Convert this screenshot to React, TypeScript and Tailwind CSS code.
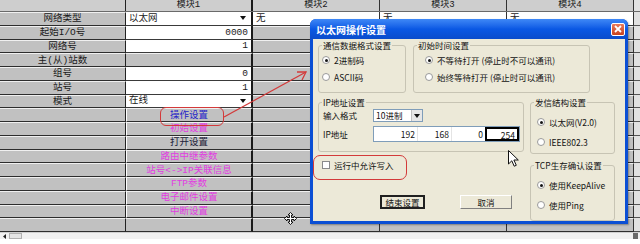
import React from 'react';

type Cell1 =
  | { kind: 'select'; text: string }
  | { kind: 'num'; text: string }
  | { kind: 'gray' }
  | { kind: 'btn'; text: string; color: string };

const rows: { label: string; m1: Cell1; white?: boolean }[] = [
  { label: '网络类型', m1: { kind: 'select', text: '以太网' }, white: true },
  { label: '起始I/O号', m1: { kind: 'num', text: '0000' } },
  { label: '网络号', m1: { kind: 'num', text: '1' } },
  { label: '主(从)站数', m1: { kind: 'gray' } },
  { label: '组号', m1: { kind: 'num', text: '0' } },
  { label: '站号', m1: { kind: 'num', text: '1' } },
  { label: '模式', m1: { kind: 'select', text: '在线' } },
  { label: '', m1: { kind: 'btn', text: '操作设置', color: 'text-[#2424c8]' } },
  { label: '', m1: { kind: 'btn', text: '初始设置', color: 'text-[#e23de2]' } },
  { label: '', m1: { kind: 'btn', text: '打开设置', color: 'text-[#1c1c3a]' } },
  { label: '', m1: { kind: 'btn', text: '路由中继参数', color: 'text-[#e23de2]' } },
  { label: '', m1: { kind: 'btn', text: '站号<->IP关联信息', color: 'text-[#e23de2]' } },
  { label: '', m1: { kind: 'btn', text: 'FTP参数', color: 'text-[#e23de2]' } },
  { label: '', m1: { kind: 'btn', text: '电子邮件设置', color: 'text-[#e23de2]' } },
  { label: '', m1: { kind: 'btn', text: '中断设置', color: 'text-[#e23de2]' } },
  { label: '', m1: { kind: 'gray' } },
];

const gray = 'bg-[#c1c1c1] border-t border-t-[#f0f0f0] border-b border-b-[#2e2e2e]';
const white = 'bg-white border-b border-b-[#3a3a3a]';

const DownTri = () => (
  <svg width="6" height="4" viewBox="0 0 6 4" className="shrink-0">
    <path d="M0 0 L6 0 L3 4 Z" fill="#111" />
  </svg>
);

const ModuleCell: React.FC<{ c: Cell1 }> = ({ c }) => {
  if (c.kind === 'select')
    return (
      <div className={`w-[127px] flex items-center justify-between pl-[3px] pr-[5px] border-r-2 border-r-[#1a1a1a] ${white}`}>
        <span>{c.text}</span>
        <DownTri />
      </div>
    );
  if (c.kind === 'num')
    return (
      <div className={`w-[127px] flex items-center justify-end pr-[3px] border-r-2 border-r-[#1a1a1a] ${white}`}>
        {c.text}
      </div>
    );
  if (c.kind === 'btn')
    return (
      <div className={`w-[127px] flex items-center justify-center border-l border-l-white border-r-2 border-r-[#1a1a1a] ${gray} ${c.color}`}>
        {c.text}
      </div>
    );
  return <div className={`w-[127px] border-r-2 border-r-[#1a1a1a] ${gray}`} />;
};

const Radio: React.FC<{ checked?: boolean; label: string }> = ({ checked, label }) => (
  <div className="flex items-center gap-[4px] h-[16px]">
    <span className="w-[8px] h-[8px] rounded-full border border-[#9a9a9a] bg-white flex items-center justify-center shrink-0">
      {checked && <span className="w-[3px] h-[3px] rounded-full bg-[#151515]" />}
    </span>
    <span className="whitespace-nowrap">{label}</span>
  </div>
);

const Group: React.FC<{ title: string; className: string; children: React.ReactNode }> = ({ title, className, children }) => (
  <fieldset className={`border border-[#c7c4b4] rounded-[3px] px-[3px] shrink-0 ${className}`}>
    <legend className="px-[1px] leading-[12px] whitespace-nowrap">{title}</legend>
    {children}
  </fieldset>
);

export default function App() {
  return (
    <div className="relative w-[640px] h-[244px] overflow-hidden bg-white font-['Liberation_Mono','Noto_Sans_CJK_SC',monospace] text-[9.5px] text-[#1a1a1a]">
      {/* spreadsheet */}
      <div className="flex flex-col">
        <div className="flex h-[12px] bg-[#cecece] border-b border-b-[#6a6a6a] leading-[11px] text-[9px]">
          <div className="w-[126px] border-r border-r-[#222]" />
          <div className="w-[127px] border-r-2 border-r-[#1a1a1a] text-center">模块1</div>
          <div className="w-[127px] border-r border-r-[#333] text-center">模块2</div>
          <div className="w-[127px] border-r border-r-[#333] text-center">模块3</div>
          <div className="w-[127px] border-r border-r-[#333] text-center">模块4</div>
          <div className="w-[6px] bg-[#e2e2e2]" />
        </div>
        {rows.map((r, i) => (
          <div key={i} className="flex h-[13.75px] leading-[11px]">
            <div className={`w-[126px] flex items-center justify-center border-r border-r-[#222] ${gray}`}>{r.label}</div>
            <ModuleCell c={r.m1} />
            {[0, 1, 2].map((k) =>
              r.white ? (
                <div key={k} className={`w-[127px] pl-[3px] flex items-center border-r border-r-[#333] ${white}`}>无</div>
              ) : (
                <div key={k} className={`w-[127px] border-r border-r-[#333] ${gray}`} />
              )
            )}
            <div className="w-[6px] bg-[#e2e2e2] border-b border-b-[#555]" />
          </div>
        ))}
        <div className="flex flex-col h-[12px]">
          <div className="flex h-[7px] bg-[#f1f1f1] border-t border-t-[#d0d0d0]">
            <div className="w-[9px] flex items-center justify-center">
              <svg width="3" height="5" viewBox="0 0 3 5"><path d="M3 0 L0 2.5 L3 5 Z" fill="#222" /></svg>
            </div>
            <div className="w-[13px] border border-[#b0b0b0] bg-[#e4e4e4]" />
            <div className="flex-1" />
            <div className="w-[5px] mr-[2px] bg-[#6a6a6a]" />
          </div>
          <div className="flex-1 bg-white" />
        </div>
      </div>

      {/* dialog */}
      <div className="absolute left-[310px] top-[19px] w-[318px] h-[205px] flex flex-col rounded-t-[6px] bg-[#0b4fd4] shadow-[1px_1px_2px_rgba(0,0,0,0.35)] text-[8.5px] text-[#111] font-['Noto_Sans_CJK_SC','Liberation_Sans',sans-serif]">
        <div className="h-[20px] flex items-center justify-between pl-[6px] pr-[3px] rounded-t-[6px] bg-gradient-to-b from-[#3f88f6] via-[#0a58e4] to-[#0a4ccb]">
          <span className="text-white font-bold text-[10px]">以太网操作设置</span>
          <div className="w-[14px] h-[13px] rounded-[2px] border border-white bg-gradient-to-b from-[#ea7a5a] to-[#c6401c] flex items-center justify-center">
            <svg width="8" height="8" viewBox="0 0 8 8">
              <path d="M1 1 L7 7 M7 1 L1 7" stroke="white" strokeWidth="1.8" />
            </svg>
          </div>
        </div>
        <div className="flex-1 mx-[3px] mb-[3px] bg-[#ece9d8] pl-[5px] flex flex-col">
          <div className="flex gap-[7px] h-[54px]">
            <Group title="通信数据格式设置" className="w-[88px] h-[54px]">
              <div className="flex flex-col gap-[1px] pt-[1px]">
                <Radio checked label="2进制码" />
                <Radio label="ASCII码" />
              </div>
            </Group>
            <Group title="初始时间设置" className="w-[177px] h-[54px]">
              <div className="flex flex-col gap-[1px] pt-[1px] pl-[8px]">
                <Radio checked label="不等待打开 (停止时不可以通讯)" />
                <Radio label="始终等待打开 (停止时可以通讯)" />
              </div>
            </Group>
          </div>
          <div className="flex gap-[6px] mt-[3px]">
            <div className="flex flex-col w-[206px]">
              <Group title="IP地址设置" className="w-[206px] h-[56px]">
                <div className="flex flex-col gap-[3px] pl-[1px]">
                  <div className="flex items-center h-[15px]">
                    <span className="w-[50px]">输入格式</span>
                    <div className="w-[50px] h-[13px] bg-white border border-[#7f9db9] flex items-center justify-between pl-[2px]">
                      <span>10进制</span>
                      <div className="w-[11px] h-[11px] bg-[#e6e6e6] border-l border-l-[#c0c0c0] flex items-center justify-center">
                        <DownTri />
                      </div>
                    </div>
                  </div>
                  <div className="flex items-center h-[16px]">
                    <span className="w-[50px]">IP地址</span>
                    <div className="w-[147px] h-[16px] bg-white border border-[#7f9db9] flex">
                      <div className="w-[44px] text-right pr-[2px] leading-[14px] border-r border-r-[#e4e4e4]">192</div>
                      <div className="w-[34px] text-right pr-[2px] leading-[14px] border-r border-r-[#e4e4e4]">168</div>
                      <div className="w-[33px] text-right pr-[2px] leading-[14px]">0</div>
                      <div className="flex-1 text-right pr-[2px] leading-[12px] border-2 border-black">254</div>
                    </div>
                  </div>
                </div>
              </Group>
              <div className="flex items-center gap-[4px] h-[14px] mt-[6px] pl-[4px]">
                <span className="w-[8px] h-[8px] border border-[#8a8a8a] bg-white" />
                <span>运行中允许写入</span>
              </div>
              <div className="flex gap-[35px] mt-[23px] pl-[62px]">
                <div className="w-[45px] h-[14px] border-2 border-[#202020] bg-[#ece9d8] flex items-center justify-center leading-[10px]">结束设置</div>
                <div className="w-[52px] h-[14px] border border-t-white border-l-white border-b-[#808080] border-r-[#808080] bg-[#ece9d8] flex items-center justify-center">取消</div>
              </div>
            </div>
            <div className="flex flex-col gap-[5px] w-[85px]">
              <Group title="发信结构设置" className="w-[85px] h-[58px]">
                <div className="flex flex-col gap-[4px] pt-[6px] pl-[3px]">
                  <Radio checked label="以太网(V2.0)" />
                  <Radio label="IEEE802.3" />
                </div>
              </Group>
              <Group title="TCP生存确认设置" className="w-[85px] h-[62px]">
                <div className="flex flex-col gap-[4px] pt-[6px] pl-[3px]">
                  <Radio checked label="使用KeepAlive" />
                  <Radio label="使用Ping" />
                </div>
              </Group>
            </div>
          </div>
        </div>
      </div>

      {/* annotations */}
      <div className="absolute left-[160px] top-[107px] w-[64px] h-[19px] rounded-[6px] border-[1.5px] border-[#d33a3a]" />
      <div className="absolute left-[313px] top-[155px] w-[94px] h-[25px] rounded-[7px] border-[1.5px] border-[#d33a3a]" />
      <svg className="absolute left-0 top-0 pointer-events-none" width="640" height="244">
        <path d="M224 117 L306 72" stroke="#d33a3a" strokeWidth="1.3" fill="none" />
        <path d="M297 72 L306 72 L302 80" stroke="#d33a3a" strokeWidth="1.3" fill="none" />
      </svg>

      {/* cursors */}
      <svg className="absolute left-[508px] top-[150px]" width="12" height="18" viewBox="0 0 12 18">
        <path d="M0.5 0.5 L0.5 14 L3.8 10.8 L6.2 16.2 L8.3 15.3 L5.9 10 L10.3 10 Z" fill="white" stroke="#111" strokeWidth="1" />
      </svg>
      <svg className="absolute left-[284px] top-[212px]" width="13" height="13" viewBox="0 0 13 13">
        <path
          d="M6.5 0.5 L9 3 L7.5 3 L7.5 5.5 L10 5.5 L10 4 L12.5 6.5 L10 9 L10 7.5 L7.5 7.5 L7.5 10 L9 10 L6.5 12.5 L4 10 L5.5 10 L5.5 7.5 L3 7.5 L3 9 L0.5 6.5 L3 4 L3 5.5 L5.5 5.5 L5.5 3 L4 3 Z"
          fill="white"
          stroke="#111"
          strokeWidth="1"
        />
      </svg>
    </div>
  );
}
